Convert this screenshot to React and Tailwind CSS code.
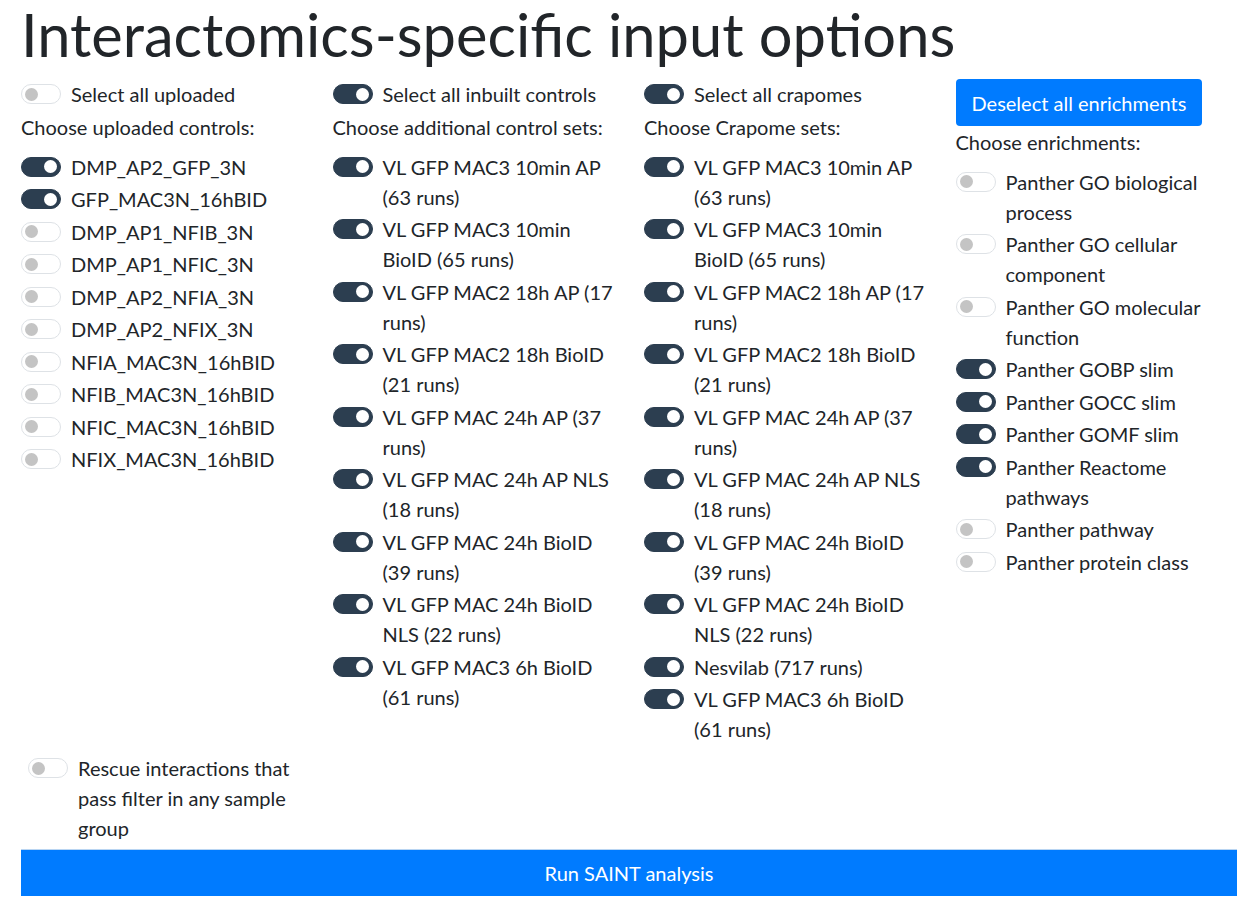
import React from "react";

const uploaded = [
  ["DMP_AP2_GFP_3N", true],
  ["GFP_MAC3N_16hBID", true],
  ["DMP_AP1_NFIB_3N", false],
  ["DMP_AP1_NFIC_3N", false],
  ["DMP_AP2_NFIA_3N", false],
  ["DMP_AP2_NFIX_3N", false],
  ["NFIA_MAC3N_16hBID", false],
  ["NFIB_MAC3N_16hBID", false],
  ["NFIC_MAC3N_16hBID", false],
  ["NFIX_MAC3N_16hBID", false],
];

const inbuilt = [
  "VL GFP MAC3 10min AP (63 runs)",
  "VL GFP MAC3 10min BioID (65 runs)",
  "VL GFP MAC2 18h AP (17 runs)",
  "VL GFP MAC2 18h BioID (21 runs)",
  "VL GFP MAC 24h AP (37 runs)",
  "VL GFP MAC 24h AP NLS (18 runs)",
  "VL GFP MAC 24h BioID (39 runs)",
  "VL GFP MAC 24h BioID NLS (22 runs)",
  "VL GFP MAC3 6h BioID (61 runs)",
];

const crapomes = [
  ...inbuilt.slice(0, 8),
  "Nesvilab (717 runs)",
  "VL GFP MAC3 6h BioID (61 runs)",
];

const enrichments = [
  ["Panther GO biological process", false],
  ["Panther GO cellular component", false],
  ["Panther GO molecular function", false],
  ["Panther GOBP slim", true],
  ["Panther GOCC slim", true],
  ["Panther GOMF slim", true],
  ["Panther Reactome pathways", true],
  ["Panther pathway", false],
  ["Panther protein class", false],
];

// bootstrap-ish custom switch
const Toggle = ({ on }) => (
  <span
    className={`shrink-0 mt-[5px] w-[40px] h-[20px] rounded-full border flex items-center px-[3px] ${
      on
        ? "bg-[#2c3e50] border-[#2c3e50] justify-end"
        : "bg-white border-[#dee2e6] justify-start"
    }`}
  >
    <span
      className={`w-[13px] h-[13px] rounded-full ${
        on ? "bg-white" : "bg-[#c4c4c4]"
      }`}
    />
  </span>
);

const Switch = ({ on, label, className = "" }) => (
  <div className={`flex items-start gap-[10px] mb-[2.5px] ${className}`}>
    <Toggle on={on} />
    <span>{label}</span>
  </div>
);

const Label = ({ children }) => <div className="mb-[10px]">{children}</div>;

const App = () => {
  return (
    <div className="font-['Lato',sans-serif] text-[20px] leading-[30px] text-[#212529] bg-white min-h-[908px]">
      <h1 className="text-[59.6px] leading-[68px] pl-[21px] mb-[11px] font-normal">
        Interactomics-specific input options
      </h1>

      <div className="ml-[6px] grid grid-cols-[repeat(4,311.5px)]">
        {/* ---------- UPLOADED ---------- */}
        <div className="px-[15px]">
          <Switch on={false} label="Select all uploaded" />
          <Label>Choose uploaded controls:</Label>
          {uploaded.map(([name, on]) => (
            <Switch key={name} on={on} label={name} />
          ))}
        </div>
        {/* ---------- INBUILT ---------- */}
        <div className="px-[15px]">
          <Switch on label="Select all inbuilt controls" />
          <Label>Choose additional control sets:</Label>
          {inbuilt.map((name) => (
            <Switch key={name} on label={name} />
          ))}
        </div>
        {/* ---------- CRAPOME ---------- */}
        <div className="px-[15px]">
          <Switch on label="Select all crapomes" />
          <Label>Choose Crapome sets:</Label>
          {crapomes.map((name, i) => (
            <Switch key={name + i} on label={name} />
          ))}
        </div>
        {/* ---------- ENRICHMENTS ---------- */}
        <div className="px-[15px]">
          <button className="h-[47px] px-4 rounded-[4px] bg-[#007bff] text-white mb-[0.5px]">
            Deselect all enrichments
          </button>
          <Label>Choose enrichments:</Label>
          {enrichments.map(([name, on]) => (
            <Switch key={name} on={on} label={name} />
          ))}
        </div>
      </div>

      <div className="ml-[6px] w-[311.5px] pl-[22px] pr-[15px] mt-[6.5px]">
        <Switch on={false} label="Rescue interactions that pass filter in any sample group" />
      </div>

      <div className="pl-[21px] pr-[10px] mt-[6px]">
        <button className="w-full h-[47px] bg-[#007bff] border-t border-[#b9d5f2] text-white">
          Run SAINT analysis
        </button>
      </div>
    </div>
  );
};

export default App;
